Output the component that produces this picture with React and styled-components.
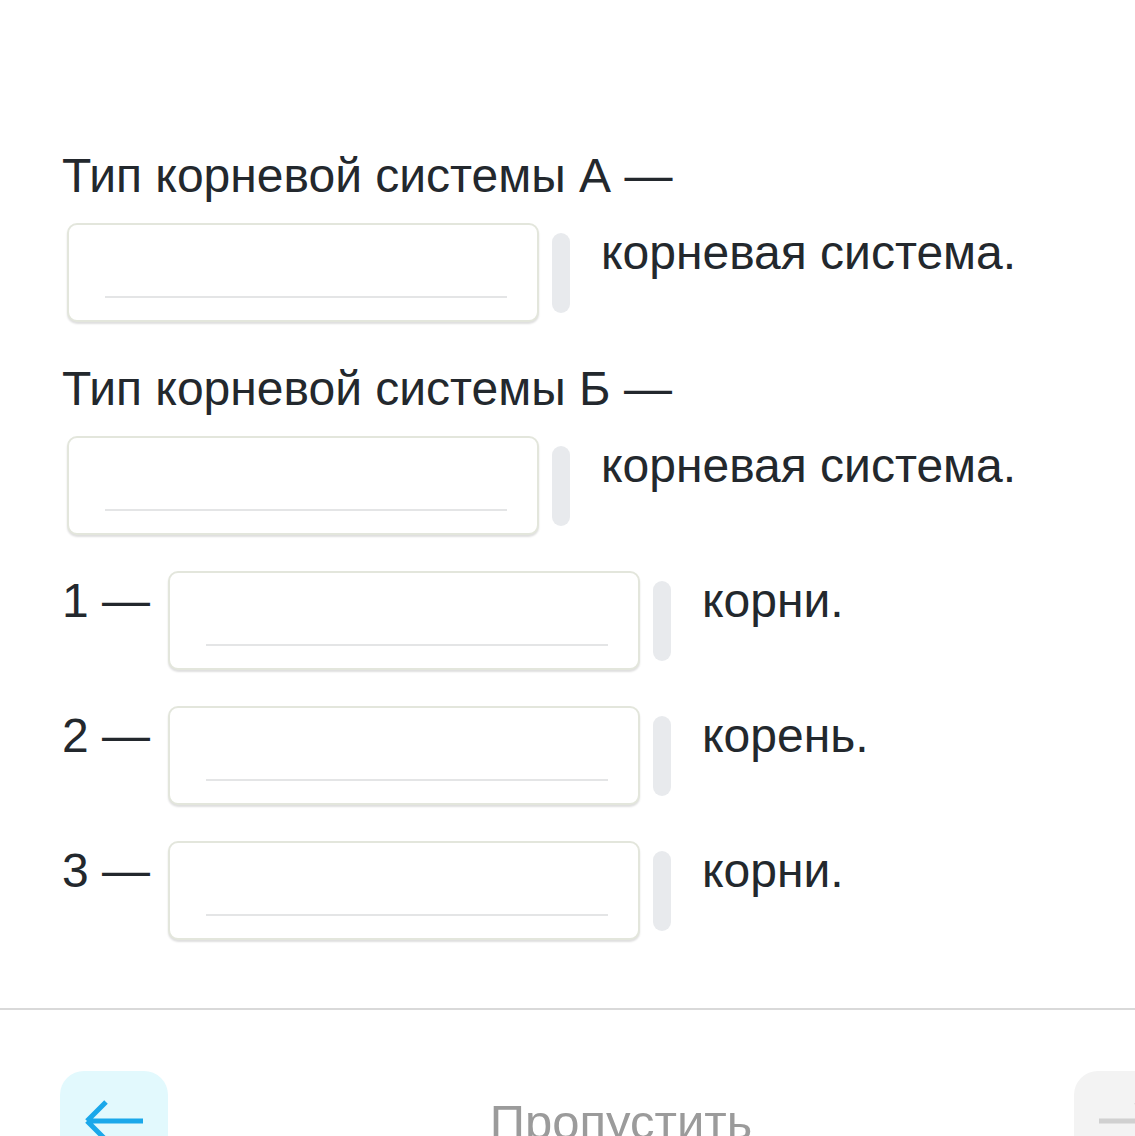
import React from "react";
import styled, { createGlobalStyle } from "styled-components";

const Global = createGlobalStyle`
  html, body {
    margin: 0;
    padding: 0;
    background: #ffffff;
    overflow: hidden;
  }
  body {
    font-family: "Liberation Sans", Arial, Helvetica, sans-serif;
    color: #23282d;
  }
`;

const Page = styled.div`
  width: 1135px;
  min-height: 1136px;
  overflow: hidden;
`;

const Content = styled.div`
  padding: 146px 0 68px 62px;
  display: flex;
  flex-direction: column;
`;

const Prompt = styled.div`
  font-size: 48px;
  line-height: 60px;
  margin-top: ${(p) => (p.$first ? "0" : "37px")};
`;

const BlankRow = styled.div`
  display: flex;
  align-items: flex-start;
  margin-top: ${(p) => p.$gap}px;
`;

const Lead = styled.span`
  font-size: 48px;
  line-height: 60px;
  margin-right: 18px;
  white-space: nowrap;
`;

const Blank = styled.div`
  box-sizing: border-box;
  width: 472px;
  height: 99px;
  margin-left: ${(p) => (p.$indent ? "5px" : "0")};
  background: #ffffff;
  border: 2px solid #e3e6dc;
  border-radius: 10px;
  box-shadow: 0 2px 2px rgba(0, 0, 0, 0.13);
  display: flex;
  align-items: flex-end;
  padding: 0 30px 22px 36px;
`;

const Underline = styled.div`
  flex: 1;
  height: 2px;
  background: #e4e5e6;
`;

const Handle = styled.div`
  align-self: center;
  width: 18px;
  height: 80px;
  margin-left: 13px;
  border-radius: 9px;
  background: #e8eaed;
`;

const Tail = styled.span`
  font-size: 48px;
  line-height: 60px;
  margin-left: 31px;
  white-space: nowrap;
`;

const Divider = styled.div`
  height: 2px;
  background: #d9d9d9;
`;

const Footer = styled.div`
  width: 1242px;
  box-sizing: border-box;
  padding: 61px 60px 0;
  display: grid;
  grid-template-columns: 108px 1fr 108px;
  align-items: start;
`;

const NavButton = styled.div`
  height: 100px;
  border-radius: 24px;
  background: ${(p) => (p.$active ? "#e2f9fd" : "#f3f3f3")};
  display: flex;
  align-items: center;
  justify-content: center;
`;

const Skip = styled.div`
  text-align: center;
  font-size: 49px;
  line-height: 60px;
  color: #9b9b9b;
  padding-top: 21px;
`;

const ArrowLeft = () => (
  <svg width="64" height="44" viewBox="0 0 64 44" fill="none">
    <path
      d="M61 22H5M5 22L24 3M5 22L24 41"
      stroke="#1aa8ea"
      strokeWidth="5"
    />
  </svg>
);

const ArrowRight = () => (
  <svg width="64" height="44" viewBox="0 0 64 44" fill="none">
    <path
      d="M3 22H59M59 22L40 3M59 22L40 41"
      stroke="#d0d0d0"
      strokeWidth="5"
    />
  </svg>
);

const BlankSlot = ({ indent }) => (
  <>
    <Blank $indent={indent}>
      <Underline />
    </Blank>
    <Handle />
  </>
);

export default function App() {
  return (
    <Page>
      <Global />
      <Content>
        <Prompt $first>Тип корневой системы А —</Prompt>
        <BlankRow $gap={17}>
          <BlankSlot indent />
          <Tail>корневая система.</Tail>
        </BlankRow>
        <Prompt>Тип корневой системы Б —</Prompt>
        <BlankRow $gap={17}>
          <BlankSlot indent />
          <Tail>корневая система.</Tail>
        </BlankRow>
        <BlankRow $gap={36}>
          <Lead>1 —</Lead>
          <BlankSlot />
          <Tail>корни.</Tail>
        </BlankRow>
        <BlankRow $gap={36}>
          <Lead>2 —</Lead>
          <BlankSlot />
          <Tail>корень.</Tail>
        </BlankRow>
        <BlankRow $gap={36}>
          <Lead>3 —</Lead>
          <BlankSlot />
          <Tail>корни.</Tail>
        </BlankRow>
      </Content>
      <Divider />
      <Footer>
        <NavButton $active>
          <ArrowLeft />
        </NavButton>
        <Skip>Пропустить</Skip>
        <NavButton>
          <ArrowRight />
        </NavButton>
      </Footer>
    </Page>
  );
}
